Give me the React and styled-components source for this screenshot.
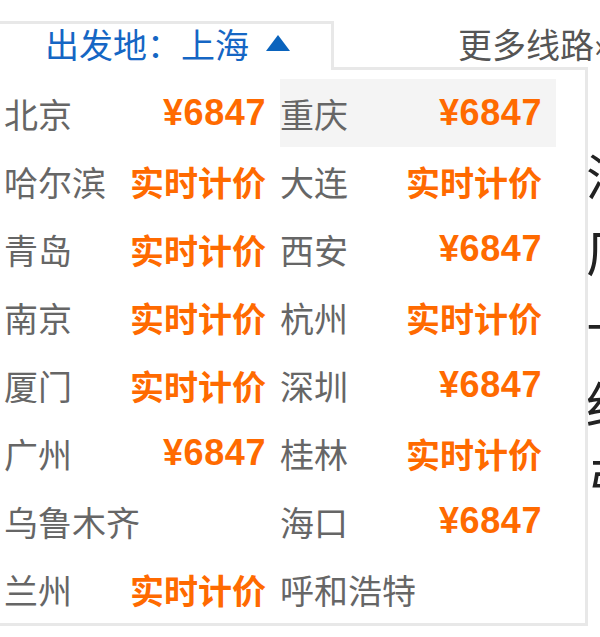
import React from "react";
import styled, { createGlobalStyle } from "styled-components";

const GlobalStyle = createGlobalStyle`
  html, body {
    margin: 0;
    padding: 0;
    background: #ffffff;
  }
  body {
    font-family: "Noto Sans CJK SC", "Noto Sans", sans-serif;
  }
`;

const cities = [
  { name: "北京", price: "¥6847" },
  { name: "重庆", price: "¥6847", active: true },
  { name: "哈尔滨", price: "实时计价" },
  { name: "大连", price: "实时计价" },
  { name: "青岛", price: "实时计价" },
  { name: "西安", price: "¥6847" },
  { name: "南京", price: "实时计价" },
  { name: "杭州", price: "实时计价" },
  { name: "厦门", price: "实时计价" },
  { name: "深圳", price: "¥6847" },
  { name: "广州", price: "¥6847" },
  { name: "桂林", price: "实时计价" },
  { name: "乌鲁木齐", price: "" },
  { name: "海口", price: "¥6847" },
  { name: "兰州", price: "实时计价" },
  { name: "呼和浩特", price: "" },
];

const backdrop = ["汇", "厂", "十", "红", "弓"];

function App() {
  return (
    <Page>
      <GlobalStyle />
      <TabBar>
        <Tab>
          <TabLabel>出发地：上海</TabLabel>
          <Caret viewBox="0 0 26 18">
            <path d="M13 1 L25 17 L1 17 Z" fill="#0a63bd" />
          </Caret>
        </Tab>
        <MoreLink>更多线路»</MoreLink>

        <Dropdown>
          <Grid>
            {cities.map((c) => (
              <Cell key={c.name} $active={c.active}>
                <City>{c.name}</City>
                {c.price && (
                  <Price $live={!c.price.startsWith("¥")}>{c.price}</Price>
                )}
              </Cell>
            ))}
          </Grid>
        </Dropdown>
      </TabBar>

      <Content>
        {backdrop.map((ch) => (
          <BigLine key={ch}>{ch}</BigLine>
        ))}
      </Content>
    </Page>
  );
}

export default App;

const Page = styled.div`
  width: 600px;
  height: 637px;
  overflow: hidden;
  position: relative;
`;

const TabBar = styled.div`
  position: relative;
  display: flex;
  align-items: flex-start;
  margin-top: 21px;
  margin-left: -8px;
  z-index: 2;
`;

const Tab = styled.div`
  position: relative;
  z-index: 3;
  box-sizing: border-box;
  width: 345px;
  height: 49px;
  padding: 0 40px 6px 50px;
  display: flex;
  align-items: center;
  justify-content: center;
  gap: 16px;
  background: #ffffff;
  border: 3px solid #e8e8e8;
  border-bottom: none;
`;

const TabLabel = styled.span`
  font-size: 34px;
  line-height: 40px;
  color: #1566c4;
  white-space: nowrap;
`;

const Caret = styled.svg`
  width: 26px;
  height: 18px;
  flex-shrink: 0;
  margin-top: -2px;
`;

const MoreLink = styled.span`
  margin-left: 124px;
  font-size: 34px;
  line-height: 46px;
  color: #555555;
  white-space: nowrap;
`;

const Dropdown = styled.div`
  position: absolute;
  top: 46px;
  left: 0;
  z-index: 2;
  box-sizing: border-box;
  width: 596px;
  height: 559px;
  padding: 9px 0 0 9px;
  background: #ffffff;
  border: 3px solid #e8e8e8;
`;

const Grid = styled.div`
  display: grid;
  grid-template-columns: 276px 276px;
  grid-auto-rows: 68px;
`;

const Cell = styled.div`
  display: flex;
  align-items: center;
  justify-content: space-between;
  padding-right: 14px;
  background: ${(p) => (p.$active ? "#f4f4f4" : "transparent")};
`;

const City = styled.span`
  font-size: 34px;
  color: #666666;
  white-space: nowrap;
`;

const Price = styled.span`
  font-family: ${(p) =>
    p.$live
      ? '"Noto Sans CJK SC", sans-serif'
      : '"Liberation Sans", Arial, sans-serif'};
  font-size: ${(p) => (p.$live ? "34px" : "36px")};
  font-weight: bold;
  letter-spacing: ${(p) => (p.$live ? "0" : "0.6px")};
  color: #ff6a00;
  white-space: nowrap;
`;

const Content = styled.div`
  position: relative;
  z-index: 1;
  margin-top: 66px;
  padding-left: 586px;
`;

const BigLine = styled.div`
  font-size: 50px;
  line-height: 76px;
  color: #222222;
  white-space: nowrap;
`;
